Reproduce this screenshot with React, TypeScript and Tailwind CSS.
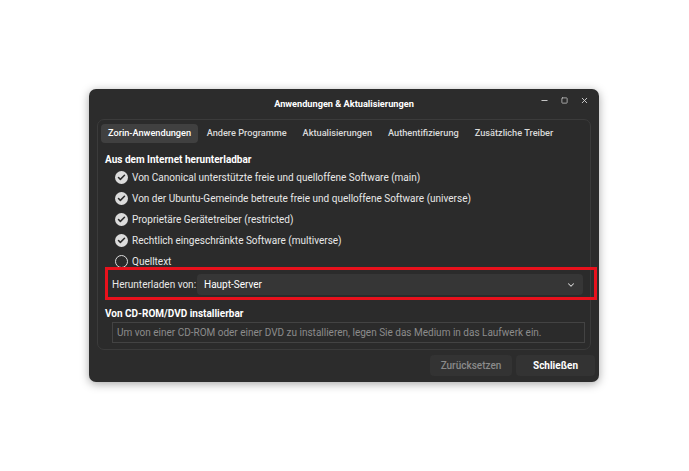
import { Check, ChevronDown, Minus, Square, X } from "lucide-react";

const sources = [
  { label: "Von Canonical unterstützte freie und quelloffene Software (main)", on: true },
  { label: "Von der Ubuntu-Gemeinde betreute freie und quelloffene Software (universe)", on: true },
  { label: "Proprietäre Gerätetreiber (restricted)", on: true },
  { label: "Rechtlich eingeschränkte Software (multiverse)", on: true },
  { label: "Quelltext", on: false },
];

const tabs = ["Zorin-Anwendungen", "Andere Programme", "Aktualisierungen", "Authentifizierung", "Zusätzliche Treiber"];

function CheckItem({ label, on }: { label: string; on: boolean }) {
  return (
    <div className="flex h-[21px] items-center gap-[4px] pl-[10px]">
      {on ? (
        <span className="flex h-[13px] w-[13px] items-center justify-center rounded-full bg-[#dcdcdc]">
          <Check className="h-[9px] w-[9px] text-[#2b2b2b]" strokeWidth={4} />
        </span>
      ) : (
        <span className="h-[13px] w-[13px] rounded-full border-[1.5px] border-[#dcdcdc]" />
      )}
      <span className="whitespace-nowrap">{label}</span>
    </div>
  );
}

export default function App() {
  return (
    <div
      className="h-[471px] w-[689px] bg-white pl-[89px] pt-[89px] text-[10px] text-[#e8e8e8]"
      style={{ fontFamily: "Roboto, 'Noto Sans', sans-serif" }}
    >
      <div className="flex h-[293px] w-[510px] flex-col rounded-[7px] bg-[#2c2c2c] shadow-[0_2px_10px_rgba(0,0,0,0.35)]">
        {/* title bar */}
        <div className="relative flex h-[27px] shrink-0 items-center justify-center pt-[2px]">
          <span className="text-[9.2px] font-bold text-white">Anwendungen &amp; Aktualisierungen</span>
          <div className="absolute right-[10px] top-[7px] flex items-center gap-[12px] text-[#d0d0d0]">
            <Minus className="h-[9px] w-[9px]" strokeWidth={2.5} />
            <Square className="h-[7px] w-[7px]" strokeWidth={2.5} />
            <X className="h-[9px] w-[9px]" strokeWidth={2.5} />
          </div>
        </div>

        {/* notebook */}
        <div className="mx-[8px] mt-[3px] flex h-[231px] flex-col rounded-[7px] border border-[#3b3b3b] bg-[#2b2b2b]">
          <div className="flex h-[26px] shrink-0 items-center gap-[1px] whitespace-nowrap pl-[3px] text-[9.2px] font-medium text-[#dadada]">
            {tabs.map((t, i) => (
              <span
                key={t}
                className={
                  i === 0
                    ? "flex h-[19px] items-center rounded-[4px] bg-[#404040] px-[7px] text-white"
                    : "flex h-[19px] items-center px-[7.5px]"
                }
              >
                {t}
              </span>
            ))}
          </div>

          <div className="flex flex-col px-[7px] pt-[5px]">
            <div className="flex h-[16px] items-center font-bold text-white">Aus dem Internet herunterladbar</div>
            <div className="flex flex-col">
              {sources.map((s) => (
                <CheckItem key={s.label} {...s} />
              ))}
            </div>

            <div className="relative flex h-[25px] items-center pl-[7px]">
              <span className="w-[85px] shrink-0 whitespace-nowrap">Herunterladen von:</span>
              <div className="flex h-[21px] flex-1 items-center justify-between rounded-[4px] bg-[#363636] px-[7px]">
                <span className="text-white">Haupt-Server</span>
                <ChevronDown className="h-[10px] w-[10px] text-[#d8d8d8]" strokeWidth={2.5} />
              </div>
              <div className="pointer-events-none absolute -bottom-[3px] -right-[14px] -top-[5px] left-0 border-[3px] border-[#e8111c]" />
            </div>

            <div className="mt-[10px] flex h-[12px] items-center font-bold text-white">Von CD-ROM/DVD installierbar</div>
            <div className="-mr-[2px] ml-[7px] mt-[3px] flex h-[21px] items-center whitespace-nowrap border border-[#434343] px-[4px] text-[#8c8c8c]">
              Um von einer CD-ROM oder einer DVD zu installieren, legen Sie das Medium in das Laufwerk ein.
            </div>
          </div>
        </div>

        {/* buttons */}
        <div className="flex justify-end gap-[4px] pr-[4px] pt-[5px]">
          <span className="flex h-[21px] w-[82px] items-center justify-center rounded-[4px] bg-[#333333] font-medium text-[#8a8a8a]">
            Zurücksetzen
          </span>
          <span className="flex h-[21px] w-[79px] items-center justify-center rounded-[4px] bg-[#333333] font-bold text-white">
            Schließen
          </span>
        </div>
      </div>
    </div>
  );
}
